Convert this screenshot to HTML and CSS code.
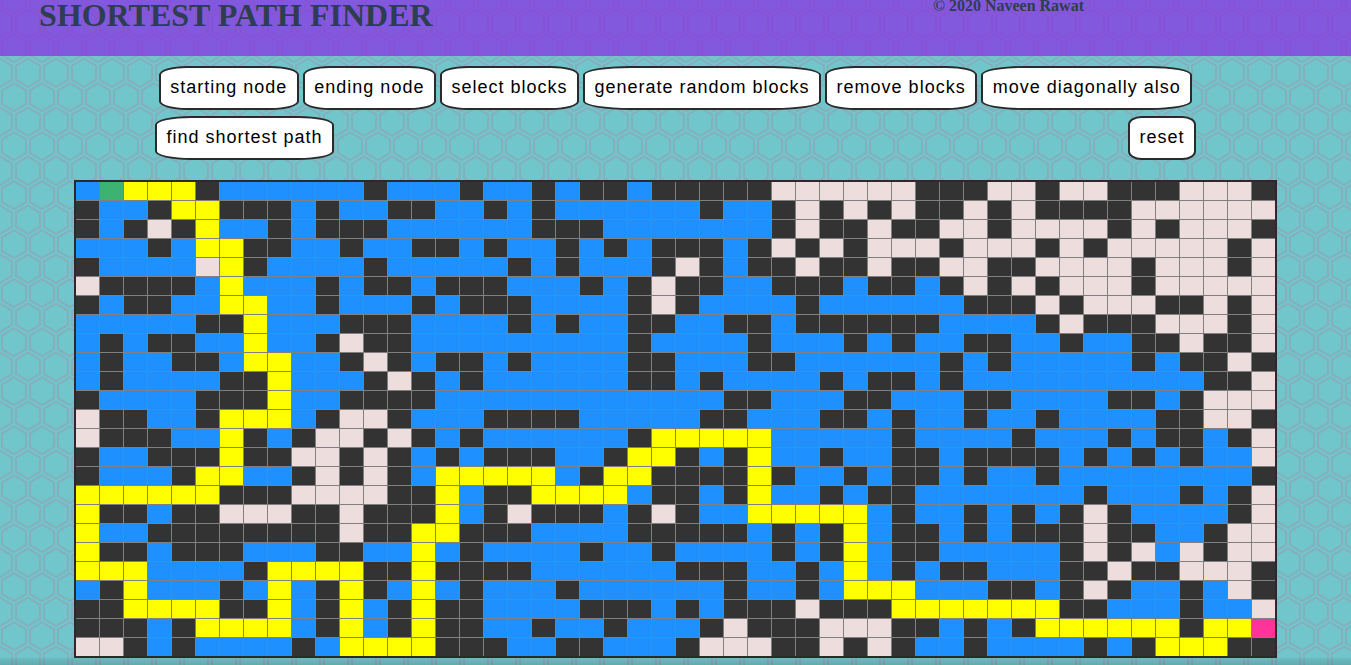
FILE: index.html
```html
<!DOCTYPE html>
<html lang="en">
<head>
<meta charset="utf-8">
<title>Shortest Path Finder</title>
<link rel="stylesheet" href="styles.css">
</head>
<body>
<header class="header">
  <h1 class="title">SHORTEST PATH FINDER</h1>
  <p class="copyright">© 2020 Naveen Rawat</p>
</header>
<main class="main">
  <div class="toolbar toolbar-main">
    <button class="btn">starting node</button>
    <button class="btn">ending node</button>
    <button class="btn">select blocks</button>
    <button class="btn">generate random blocks</button>
    <button class="btn">remove blocks</button>
    <button class="btn">move diagonally also</button>
  </div>
  <div class="toolbar toolbar-run">
    <button class="btn">find shortest path</button>
    <button class="btn">reset</button>
  </div>
  <div class="board" id="board"></div>
</main>
<div class="bottom-shade"></div>
<script src="board.js"></script>
</body>
</html>
```
FILE: board.js
```js
// . visited, # block, w free, y path, G start, P end
const rows = [
  ".Gyyy#......#" + "...#..#.##.#" + "####wwwwww##" + "#ww#ww###www#",
  "#..#yy###.#.." + "##..#.#....." + ".#..#w#w#w##" + "w#w####wwwwww",
  "#.#w#y..#.###" + "......###..." + "....#w##w##w" + "w#wwww#w#www#",
  "...#.yy##..#." + ".##.#..#.#.#" + "##.#w#w#www#" + "www#w#wwwww#w",
  "#....wy#....#" + ".....#.#...#" + "w#.##w##w##w" + "w##wwww#www#w",
  "w####.y...#.#" + "#.###...#.#w" + "##..###.##.#" + "w#w#www#wwwww",
  "#.##..yy..#.." + ".#.###....#w" + "#....#......" + "###w#www##w#w",
  ".....##y...##" + "#....#.#..##" + "..##.######." + "...#w###www#w",
  ".#.##..y..#w#" + "#.........#." + "...#...#.#.." + "##..#..##w##w",
  ".#..##.yy..#w" + "#.##.#....##" + "...##......#" + ".#.....#.##w#",
  ".#....##y...#" + "w#.#......##" + ".#....#.##.#" + "..........##w",
  "#....###y..##" + "##.........." + "..##...##..." + "##....##.#www",
  "w##..#yyy.#ww" + "#...####...." + ".##...##.#.." + "#..#....##ww#",
  "w###..y#.#ww#" + "w#.#......#y" + "yyyy.....#.." + "..#...#.##.#w",
  "#..###y##ww#w" + "#.#.###..#yy" + "#.#y..#..##." + "####.#.#.#..w",
  "#...#yy..#w#w" + "#.yyyyy.#yy#" + "###y#..#.##." + "#..#........#",
  "yyyyyy###wwww" + "##y.##yyyy.#" + "#.#y..#.##.." + ".....#...#.#w",
  "y##.##www##w#" + "##y.#w###.#w" + "#..yyyyy.#.." + "#.#.#w#....#w",
  "y..########w#" + "#yy###....##" + "###.#.#y.##." + "#.###w##..#ww",
  "y##.###...##." + ".y.#....#..#" + "....#.#y.##." + "....#w#w.w#ww",
  "yyy....#yyyy#" + "#y####......" + "###..#.y.#.#" + "#...##w##www#",
  ".#y...#.y.#y#" + ".y.#...#...." + "..#..#.yyy.." + ".##.#w#..#.w#",
  "##yyyy##y.#y." + "#y##....###." + "#.###w###yyy" + "yyyy##...#..w",
  "###.#yyyy.#y." + "#y##..#..#.." + ".#w###www##." + "#.#yyyyyy#yyP",
  "ww#.#....#.yy" + "yy###..##..." + "#www##w#w#.." + "#....#.#yyy##"
];
const kinds = { ".": "visited", "#": "block", "w": "free", "y": "path", "G": "start", "P": "end" };
const board = document.getElementById("board");
for (const row of rows) {
  for (const ch of row) {
    const cell = document.createElement("div");
    cell.className = "cell " + kinds[ch];
    board.appendChild(cell);
  }
}
```
FILE: styles.css
```css
* { box-sizing: border-box; }

body {
  margin: 0;
  height: 665px;
  overflow: hidden;
  font-family: "Liberation Serif", "Times New Roman", serif;
  background-color: #71c6cb;
  background-image: url("data:image/svg+xml,%3Csvg xmlns='http://www.w3.org/2000/svg' width='28' height='49' viewBox='0 0 28 49'%3E%3Cpath fill='%239c92ac' fill-opacity='0.45' fill-rule='evenodd' d='M13.99 9.25l13 7.5v15l-13 7.5L1 31.75v-15l12.99-7.5zM3 17.9v12.7l10.99 6.34 11-6.35V17.9l-11-6.34L3 17.9zM0 15l12.98-7.5V0h-2v6.35L0 12.69v2.3zm0 18.5L12.98 41v8h-2v-6.85L0 35.81v-2.3zM15 0v7.5L27.99 15H28v-2.31h-.01L17 6.35V0h-2zm0 49v-8l12.99-7.5H28v2.31h-.01L17 42.15V49h-2z'/%3E%3C/svg%3E");
  background-position: 0 24px;
}

.header {
  display: flex;
  align-items: flex-start;
  justify-content: space-between;
  height: 56px;
  padding: 0 267px 0 39px;
  background: rgba(138, 43, 226, 0.7);
  color: #2c3e50;
}

.title {
  margin: -3px 0 0;
  font-size: 32px;
  line-height: 37px;
}

.copyright {
  margin: -3px 0 0;
  font-size: 16px;
  font-weight: bold;
  line-height: 18px;
}

.main {
  display: flex;
  flex-direction: column;
  align-items: center;
  padding-top: 10px;
}

.toolbar {
  display: flex;
  gap: 4px;
  margin-bottom: 6px;
}

.toolbar-run {
  width: 1041px;
  justify-content: space-between;
  margin-bottom: 20px;
}

.btn {
  height: 44px;
  padding: 0 9.5px 2px;
  border: 2px solid #2a2a2a;
  border-radius: 20%;
  background: #fff;
  color: #000;
  font-family: "Liberation Sans", Arial, sans-serif;
  font-size: 18px;
  letter-spacing: 1px;
  white-space: nowrap;
}

.board {
  display: grid;
  grid-template-columns: repeat(50, 23px);
  grid-auto-rows: 18px;
  gap: 1px;
  border: 2px solid #2a2a2a;
  background: #808080;
}

.visited { background: #1e90ff; }
.block { background: #333; }
.free { background: #eedddd; }
.path { background: #ff0; }
.start { background: #3cb371; }
.end { background: #ff3399; }

/* soft shade along the lower window edge */
.bottom-shade {
  height: 7px;
  background: linear-gradient(rgba(0, 0, 0, 0.05), rgba(0, 0, 0, 0.14));
}
```
